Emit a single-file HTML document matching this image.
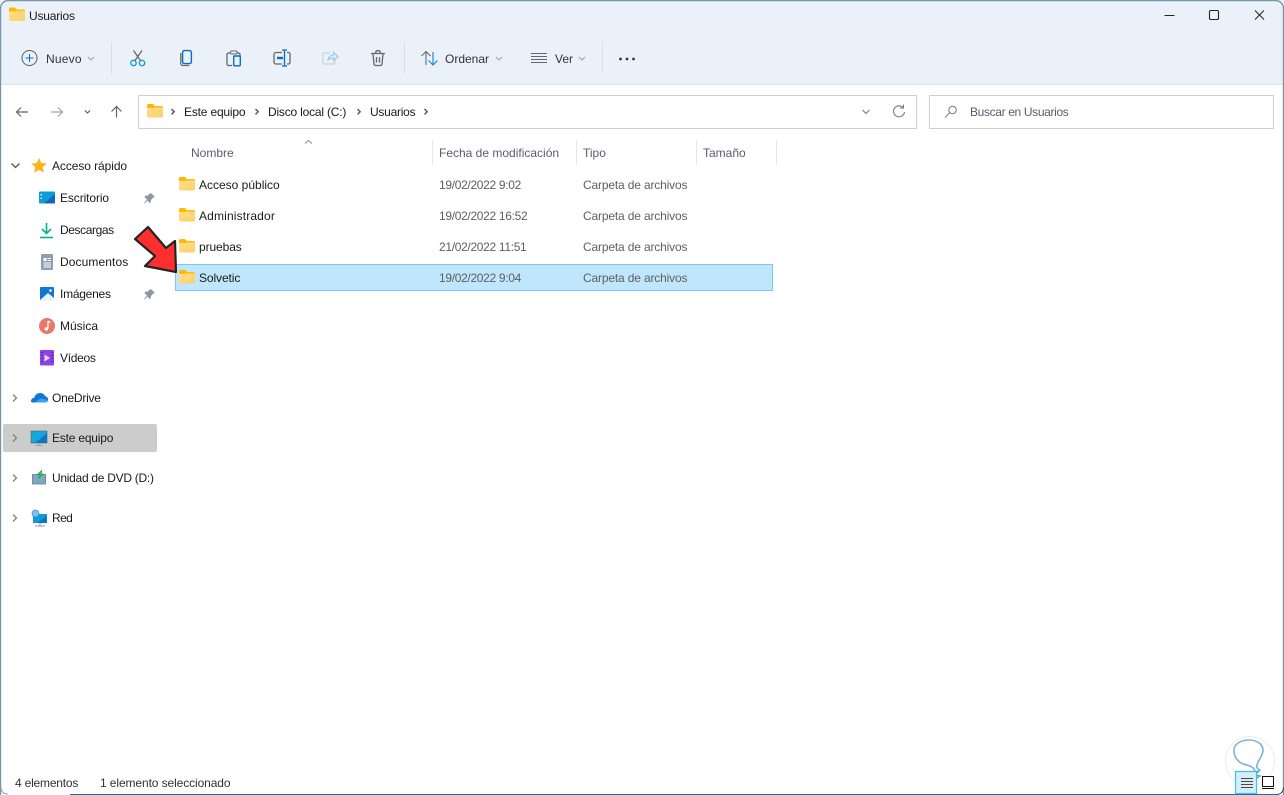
<!DOCTYPE html>
<html><head><meta charset="utf-8"><title>Usuarios</title>
<style>
html,body{margin:0;padding:0;width:1284px;height:795px;overflow:hidden;background:#fff}
body{position:relative;font-family:"Liberation Sans",sans-serif;font-size:12px;color:#1a1a1a}
.t{position:absolute;white-space:nowrap;line-height:16px}
.g{color:#5f5f5f}.h{color:#5d5a70}
.d{letter-spacing:-.32px}.c{letter-spacing:-.16px}
svg{position:absolute;left:0;top:0}
</style></head><body>
<svg width="1284" height="795" viewBox="0 0 1284 795" fill="none">
<defs>
<linearGradient id="fg" x1="0" y1="0" x2="1" y2="1"><stop offset="0" stop-color="#ffe08a"/><stop offset="1" stop-color="#fbcf68"/></linearGradient>
<g id="folder"><path d="M0 2.500a1.500 1.500 0 0 1 1.500-1.500H6l2 2h6.500A1.500 1.500 0 0 1 16 4.500V6H0z" fill="#ffb900"/><path d="M0 5h16v8a1.500 1.500 0 0 1-1.500 1.500h-13A1.500 1.500 0 0 1 0 13z" fill="url(#fg)"/><path d="M0 5h6.500L8 3.800h8V5z" fill="#ffc83d"/></g>
<path id="pin" d="M7 0l4 4-1.500.3-2.500 2.700-.3 2.500-1.200.5L3.500 7.500.5 10.500 0 10l3-3.500L.5 4l.5-1.200 2.500-.3L6.700 0z" fill="#8d99a6"/>
<path id="cr" d="M0 0l3.500 3.500L0 7" stroke="#808080" stroke-width="1.300" fill="none"/>
<path id="sm" d="M0 0l3 3 3-3" stroke="#a0a0a0" fill="none"/>
</defs>

<rect x="0" y="0" width="1284" height="84" fill="#eaf1f8"/>
<rect x="0" y="84" width="1284" height="1" fill="#dde0e3"/>
<path d="M.5 795V8A8 8 0 0 1 8.500 .5H1275.500A8 8 0 0 1 1283.500 8V795" stroke="#7b95a8" stroke-width="1.400"/>
<path d="M70 794.500H1276" stroke="#1d6a9c" stroke-width="1"/>
<path d="M1276 794.500q7 0 7.500-7" stroke="#1d4a6c" stroke-width="1"/>
<path d="M1 787q0 7 7 7" stroke="#8fa3b2"/>

<use href="#folder" x="9" y="6.500"/>
<path d="M1164.500 15.500h10" stroke="#222" stroke-width="1"/>
<rect x="1209.500" y="10.500" width="9" height="9" rx="1.200" stroke="#222" stroke-width="1.100"/>
<path d="M1255 10.500l9 9M1264 10.500l-9 9" stroke="#222" stroke-width="1"/>

<circle cx="29.500" cy="58" r="7.500" stroke="#5c5c5c" stroke-width="1"/>
<path d="M29.500 54v8M25.500 58h8" stroke="#0a6cc4" stroke-width="1"/>
<use href="#sm" x="88" y="57"/>
<path d="M111.500 42v32M404.500 42v32M602.500 42v32" stroke="#dadfe3"/>
<!-- scissors -->
<circle cx="133.500" cy="63" r="2.700" stroke="#0f9ae0" stroke-width="1.400"/>
<circle cx="142" cy="63" r="2.700" stroke="#0f9ae0" stroke-width="1.400"/>
<path d="M135 60.500L142 50.500M140.500 60.500L133.500 50.500" stroke="#66686b" stroke-width="1.300"/>
<!-- copy -->
<path d="M180.800 53v10.500a2 2 0 0 0 2 2h6.500" stroke="#66686b" stroke-width="1.300"/>
<rect x="182.600" y="50.600" width="8.800" height="13" rx="1.800" stroke="#0a6cc4" stroke-width="1.400"/>
<!-- paste -->
<path d="M230 53h-1.500a1.500 1.500 0 0 0-1.500 1.500v9.500a1.500 1.500 0 0 0 1.500 1.500h3.500M237 53h1.500a1.500 1.500 0 0 1 1.500 1.500V56" stroke="#66686b" stroke-width="1.300"/>
<rect x="230.500" y="51" width="6.500" height="3" rx="1" stroke="#66686b"/>
<rect x="233.700" y="56" width="6.600" height="9.800" rx="1" stroke="#0a6cc4" stroke-width="1.400"/>
<!-- rename -->
<path d="M282 52.500h-6a2 2 0 0 0-2 2v7.500a2 2 0 0 0 2 2h6M287 52.500h1.500a1.500 1.500 0 0 1 1.500 1.500v8.500a1.500 1.500 0 0 1-1.500 1.500H287" stroke="#66686b" stroke-width="1.300"/>
<path d="M277 58h6" stroke="#0a6cc4" stroke-width="2.400"/>
<path d="M284.500 50v16M282 50h5M282 66h5" stroke="#0a6cc4" stroke-width="1.300"/>
<!-- share -->
<path d="M330 53h-5.500a1.500 1.500 0 0 0-1.500 1.500v8a1.500 1.500 0 0 0 1.500 1.500h9a1.500 1.500 0 0 0 1.500-1.500V60" stroke="#c9d2d9" stroke-width="1.200"/>
<path d="M328 60q.5-4.500 5.500-5V52.500l4.500 4-4.500 4v-2.500q-3.500 0-5.500 2z" stroke="#9cc9ee" stroke-width="1.200"/>
<!-- trash -->
<path d="M371 53.500h14M373 54l1 10a1.800 1.800 0 0 0 1.800 1.500h4.400a1.800 1.800 0 0 0 1.800-1.500l1-10M375.500 53l.8-2.200h3.400l.8 2.200M376.500 57v5.500M379.500 57v5.500" stroke="#66686b" stroke-width="1.300"/>
<!-- sort -->
<path d="M426 65V52M421.500 56l4.500-4.500 4.500 4.500" stroke="#66686b" stroke-width="1.100"/>
<path d="M433 52v13M428.500 60.500l4.500 4.500 4.500-4.500" stroke="#0a84e0" stroke-width="1.100"/>
<use href="#sm" x="496" y="57"/>
<!-- view -->
<path d="M531 53.500h16M531 56.500h16M531 59.500h16M531 62.500h16" stroke="#66686b" stroke-width="1"/>
<use href="#sm" x="579" y="57"/>
<circle cx="620.500" cy="59" r="1.400" fill="#333"/><circle cx="627" cy="59" r="1.400" fill="#333"/><circle cx="633.500" cy="59" r="1.400" fill="#333"/>

<!-- nav -->
<path d="M16.500 112h11.500M21 107.500L16.500 112l4.500 4.500" stroke="#5f6266" stroke-width="1.200"/>
<path d="M51 112h11.500M58 107.500l4.500 4.500-4.500 4.500" stroke="#a2a5a8" stroke-width="1.200"/>
<path d="M85 110.500l2.500 2.500 2.500-2.500" stroke="#555" stroke-width="1.100"/>
<path d="M116.500 117.500V106.500M111.500 111.500l5-5 5 5" stroke="#5f6266" stroke-width="1.200"/>

<rect x="138.500" y="95.500" width="778" height="33" fill="#fff" stroke="#cfcfcf"/>
<use href="#folder" x="147" y="103"/>
<path d="M171.500 109l2.700 2.700-2.700 2.700M255.500 109l2.700 2.700-2.700 2.700M357.500 109l2.700 2.700-2.700 2.700M424.500 109l2.700 2.700-2.700 2.700" stroke="#555" stroke-width="1.400"/>
<path d="M862.500 110l3.500 3.500 3.500-3.500" stroke="#7a7a7a"/>
<path d="M903 107.500a5.500 5.500 0 1 0 1.500 4.500M903.500 104.500v3.500h-3.500" stroke="#7a7a7a" stroke-width="1.100"/>
<rect x="929.500" y="95.500" width="344" height="33" fill="#fff" stroke="#cfcfcf"/>
<circle cx="952.500" cy="110" r="3.700" stroke="#7a7a7a"/>
<path d="M949.800 112.700L945 117.500" stroke="#7a7a7a"/>

<path d="M305 143.500l3.500-3 3.500 3" stroke="#8a8a8a"/>
<path d="M432.500 140v25M576.500 140v25M696.500 140v25M776.500 140v25" stroke="#e4e6e8"/>

<rect x="175.500" y="264.500" width="597" height="26" fill="#bfe6fc" stroke="#7cc7f2"/>
<use href="#folder" x="179" y="176"/>
<use href="#folder" x="179" y="207"/>
<use href="#folder" x="179" y="238"/>
<use href="#folder" x="179" y="269"/>

<rect x="3" y="424" width="154" height="28" rx="2" fill="#cccccc"/>

<path d="M11.500 163.500l4 4 4-4" stroke="#555" stroke-width="1.300"/>
<use href="#cr" x="13" y="394.500"/>
<use href="#cr" x="13" y="434.500"/>
<use href="#cr" x="13" y="474.500"/>
<use href="#cr" x="13" y="514.500"/>

<path d="M39 158l2.300 5 5.400.6-4 3.700 1.100 5.300-4.800-2.700-4.800 2.700 1.100-5.300-4-3.700 5.400-.6z" fill="#fbb416"/>
<!-- desktop -->
<rect x="39" y="191.500" width="16" height="12" rx="1" fill="#0f9bd7"/>
<path d="M44 203.500L55 194v9.500z" fill="#1667b8"/>
<path d="M40.500 194h1.500v1.500h-1.500zM40.500 197.500h1.500V199h-1.500z" fill="#dff2fb"/>
<!-- downloads -->
<path d="M46.500 223v10M42 229l4.500 4.500 4.500-4.500" stroke="#00b294" stroke-width="1.600"/>
<path d="M40 237.500h13" stroke="#00b294" stroke-width="1.600"/>
<!-- documents -->
<rect x="41" y="254" width="12" height="16" rx="1" fill="#8b9eb4"/>
<path d="M43.500 258h3v3h-3z" fill="#fff"/><path d="M47.500 258.500h3.500M47.500 260.500h3.500M43.500 263h7.500M43.500 265h7.500M43.500 267h7.500" stroke="#fff" stroke-width=".9"/>
<!-- images -->
<rect x="40" y="287" width="14" height="14" rx="1" fill="#0e78d4"/>
<path d="M40 300l8-7 6 5v3H40z" fill="#eaf4fb"/>
<circle cx="50.500" cy="290.500" r="1.300" fill="#fff"/>
<!-- music -->
<circle cx="47" cy="326" r="8" fill="#e9786b"/>
<path d="M48 321v7.500" stroke="#fff" stroke-width="1.300"/><circle cx="46.300" cy="329" r="1.700" fill="#fff"/><path d="M48 321l2.500 1.500" stroke="#fff" stroke-width="1.200"/>
<!-- videos -->
<rect x="40" y="350" width="14" height="15.500" rx="1" fill="#8b45e6"/>
<path d="M44.500 354.500v7l5.500-3.500z" fill="#e6d4fb"/>
<path d="M41.500 352.500h1M41.500 355.500h1M41.500 358.500h1M41.500 361.500h1M51.500 352.500h1M51.500 355.500h1M51.500 358.500h1M51.500 361.500h1" stroke="#23123f" stroke-width="1"/>
<!-- onedrive -->
<path d="M31 401.500c0-2.300 1.500-3.500 3.200-3.700C35 394.700 37.200 393 40 393c2.400 0 4.300 1.200 5.200 3.300 1.800.1 2.800 1.600 2.800 3.200s-1 3-2.400 3H33c-1.300 0-2-.6-2-1z" fill="#0f78d4"/>
<path d="M35 402.500l5-3.800 5 .5 2.700 1.500c0 1-.9 1.800-2.200 1.800z" fill="#37a6ea"/>
<!-- this pc -->
<rect x="31" y="431" width="16" height="12" fill="#14a7d9" stroke="#4d6673" stroke-width=".6"/>
<path d="M35 443L47 433v10z" fill="#1273c4"/>
<path d="M39 443v2M35.500 445.500h7" stroke="#9aa6ad" stroke-width="1"/>
<!-- dvd -->
<rect x="32.500" y="474.500" width="13" height="9.500" fill="#7fa6c2" stroke="#5f7e95" stroke-width=".8"/>
<path d="M42 470l-5 4.500 2.500.5-1 3.500 5-4.500-2.500-.5z" fill="#2fc24a" stroke="#1c8f35" stroke-width=".5"/>
<!-- network -->
<rect x="33" y="514" width="14" height="9" fill="#0f9bd7"/>
<path d="M37 523l10-7v7z" fill="#1273c4"/>
<circle cx="35.500" cy="513.500" r="3.500" fill="#79c1ea" stroke="#3a8fc5" stroke-width=".7"/>
<path d="M40 523v2.500M35 526h10" stroke="#8d9aa2"/>
<use href="#pin" x="144" y="193"/>
<use href="#pin" x="144" y="289"/>

<!-- red arrow -->
<path d="M176 272L175 241L166 248L148 227L135 239L155 256L145 266Z" fill="#fe2f2f" stroke="#232323" stroke-width="2.200" stroke-linejoin="round"/>

<!-- watermark -->
<circle cx="1250" cy="761" r="24.500" stroke="#e6eef4" stroke-width="1"/>
<path d="M1255 771C1253 765 1247 766 1241 763C1236 760 1234 755 1234 750C1234 744 1241 740 1249 740C1258 740 1263 745 1263 750C1263 756 1258 760 1257 765C1256 768 1258 769 1260 770" stroke="#7db3da" stroke-width="1.600"/>
<path d="M1252 773l7-2-4 4 5 1-5 3" stroke="#4fa3d8" stroke-width="1.400"/>
<!-- view buttons -->
<rect x="1235.500" y="771.500" width="21" height="22" fill="#d5effa" stroke="#3cc1ec" stroke-width="1.200"/>
<path d="M1241 778.500h12M1241 781.500h12M1241 784.500h12M1241 787.500h12" stroke="#55443f"/>
<rect x="1262.500" y="776.500" width="11" height="10" fill="#fff" stroke="#111"/>
<path d="M1262 788.500h12" stroke="#111"/>
</svg>

<span class="t" style="left:29px;top:8px;letter-spacing:-.2px">Usuarios</span>
<span class="t" style="left:46px;top:51px;color:#333;letter-spacing:.2px">Nuevo</span>
<span class="t" style="left:445px;top:51px;color:#333">Ordenar</span>
<span class="t" style="left:555px;top:51px;color:#333">Ver</span>

<span class="t" style="left:184px;top:104px;letter-spacing:-.18px">Este equipo</span>
<span class="t" style="left:268px;top:104px;letter-spacing:-.2px">Disco local (C:)</span>
<span class="t" style="left:370px;top:104px;letter-spacing:-.25px">Usuarios</span>
<span class="t" style="left:970px;top:104px;color:#5c5a6b;letter-spacing:-.35px">Buscar en Usuarios</span>

<span class="t h" style="left:191px;top:145px">Nombre</span>
<span class="t h" style="left:439px;top:145px">Fecha de modificación</span>
<span class="t h" style="left:583px;top:145px">Tipo</span>
<span class="t h" style="left:703px;top:145px">Tamaño</span>

<span class="t" style="left:199px;top:177px">Acceso público</span>
<span class="t g d" style="left:439px;top:177px">19/02/2022 9:02</span>
<span class="t g c" style="left:583px;top:177px">Carpeta de archivos</span>
<span class="t" style="left:199px;top:208px;letter-spacing:.15px">Administrador</span>
<span class="t g d" style="left:439px;top:208px">19/02/2022 16:52</span>
<span class="t g c" style="left:583px;top:208px">Carpeta de archivos</span>
<span class="t" style="left:199px;top:239px;letter-spacing:-.1px">pruebas</span>
<span class="t g d" style="left:439px;top:239px">21/02/2022 11:51</span>
<span class="t g c" style="left:583px;top:239px">Carpeta de archivos</span>
<span class="t" style="left:199px;top:270px;letter-spacing:-.1px">Solvetic</span>
<span class="t g d" style="left:439px;top:270px">19/02/2022 9:04</span>
<span class="t g c" style="left:583px;top:270px">Carpeta de archivos</span>

<span class="t" style="left:52px;top:158px;letter-spacing:-.08px">Acceso rápido</span>
<span class="t" style="left:60px;top:190px;letter-spacing:-.1px">Escritorio</span>
<span class="t" style="left:60px;top:222px;letter-spacing:-.4px">Descargas</span>
<span class="t" style="left:60px;top:254px;letter-spacing:.1px">Documentos</span>
<span class="t" style="left:60px;top:286px;letter-spacing:-.25px">Imágenes</span>
<span class="t" style="left:60px;top:318px">Música</span>
<span class="t" style="left:60px;top:350px;letter-spacing:-.3px">Vídeos</span>
<span class="t" style="left:52px;top:390px;letter-spacing:-.25px">OneDrive</span>
<span class="t" style="left:52px;top:430px;letter-spacing:-.2px">Este equipo</span>
<span class="t" style="left:52px;top:470px;letter-spacing:-.28px">Unidad de DVD (D:)</span>
<span class="t" style="left:52px;top:510px;letter-spacing:-.6px">Red</span>

<span class="t" style="left:15px;top:775px;color:#333;letter-spacing:-.2px">4 elementos</span>
<span class="t" style="left:100px;top:775px;color:#333;letter-spacing:-.1px">1 elemento seleccionado</span>
</body></html>
